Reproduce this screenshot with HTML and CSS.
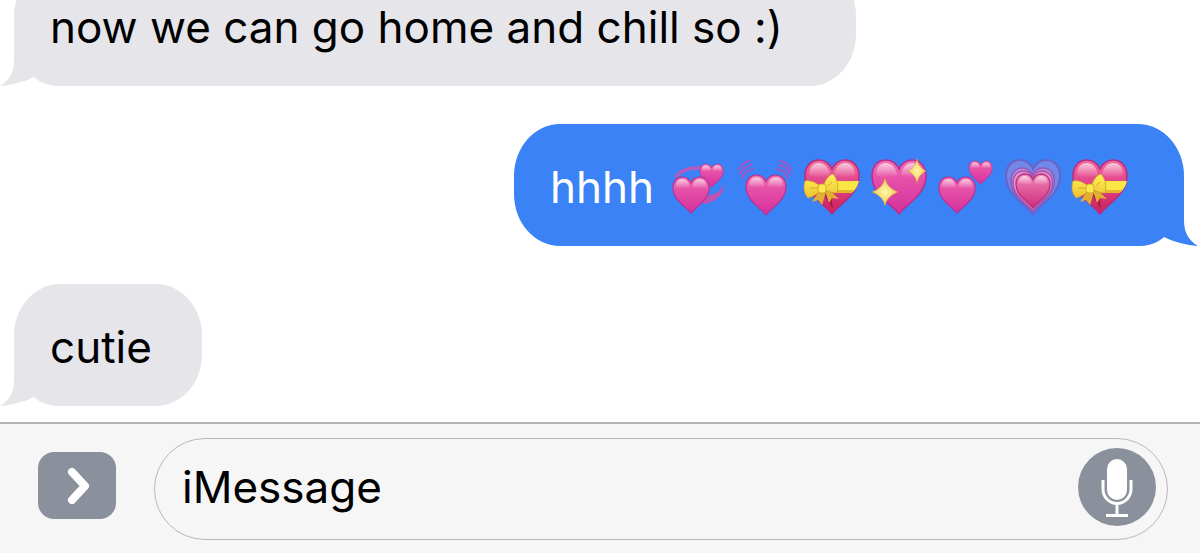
FILE: index.html
```html
<!DOCTYPE html>
<html lang="en">
<head>
  <meta charset="UTF-8">
  <meta name="viewport" content="width=device-width, initial-scale=1.0">
  <title>iMessage</title>
  <link rel="stylesheet" href="styles.css">
</head>
<body>
  <!-- shared shapes -->
  <svg class="sprite" aria-hidden="true">
    <defs>
      <linearGradient id="pink" x1="0" y1="0" x2="0" y2="1">
        <stop offset="0" stop-color="#f070b0"/>
        <stop offset="0.35" stop-color="#e650a8"/>
        <stop offset="1" stop-color="#d4309c"/>
      </linearGradient>
      <linearGradient id="red" x1="0" y1="0" x2="0" y2="1">
        <stop offset="0" stop-color="#ee6a9e"/>
        <stop offset="0.4" stop-color="#e2468c"/>
        <stop offset="1" stop-color="#c9205c"/>
      </linearGradient>
      <linearGradient id="rose" x1="0" y1="0" x2="0" y2="1">
        <stop offset="0" stop-color="#f08abc"/>
        <stop offset="0.4" stop-color="#e4609f"/>
        <stop offset="1" stop-color="#cc2c80"/>
      </linearGradient>
      <linearGradient id="shine" x1="0" y1="0" x2="0" y2="1">
        <stop offset="0" stop-color="#fff" stop-opacity="0.65"/>
        <stop offset="1" stop-color="#fff" stop-opacity="0"/>
      </linearGradient>
      <linearGradient id="gold" x1="0" y1="0" x2="0" y2="1">
        <stop offset="0" stop-color="#fdf25a"/>
        <stop offset="1" stop-color="#eec22e"/>
      </linearGradient>
      <radialGradient id="spark">
        <stop offset="0" stop-color="#fff6a8"/>
        <stop offset="1" stop-color="#f0c850"/>
      </radialGradient>
      <path id="heart" d="M27 54C18 43 0 34 0 16C0 6 6 0 14 0C20 0 25 4 27 9C29 4 34 0 40 0C48 0 54 6 54 16C54 34 36 43 27 54Z"/>
      <g id="gloss" fill="url(#shine)">
        <path d="M4 15C4 7 8 3 14 3C20 3 24 8 25 15C18 18 10 18 4 15Z"/>
        <path d="M29 15C30 8 34 3 40 3C46 3 50 7 50 15C44 18 36 18 29 15Z"/>
      </g>
      <g id="pink-heart">
        <use href="#heart" fill="url(#pink)" stroke="#b92c8e" stroke-width="1.5"/>
        <use href="#gloss"/>
      </g>
      <g id="ribbon-heart">
        <g transform="translate(3 3)">
          <use href="#heart" fill="url(#red)" stroke="#b9297a" stroke-width="1.5"/>
          <use href="#gloss"/>
        </g>
        <path fill="#f9e544" d="M26 24H57C56 28 54 32 51 35H26Z"/>
        <path fill="#e3b62e" d="M26 33H52L50 36H26Z"/>
        <path fill="#a81b42" d="M20 35L31 52L29 36Z"/>
        <path fill="#e2af35" d="M17 34L10 45L16 43L20 48L24 35ZM23 34L27 46L30 41L37 42L27 33Z"/>
        <path fill="url(#gold)" stroke="#c99a28" stroke-width="0.7" d="M17 28C12 24 6 23 3 24C1 30 2 37 6 41C11 40 15 37 18 34ZM22 27C24 22 27 18 31 17C35 21 37 29 35 36C31 36 27 35 23 33Z"/>
        <path fill="none" stroke="#d8a82c" d="M8 31L16 31M26 29L30 25"/>
        <rect x="16" y="27" width="8" height="9" rx="3" fill="#fae94d" stroke="#c99a28" stroke-width="0.7"/>
      </g>
      <path id="star" fill="url(#spark)" stroke="#c98a3c" stroke-width="0.5" d="M0 -14C2 -6 6 -3 13 0C6 3 2 6 0 14C-2 6 -6 3 -13 0C-6 -3 -2 -6 0 -14Z"/>
      <path id="tail" d="M14 0V24C14 36 10 44 0 50C12 49 24 46 34 41C41 47 48 50 62 50V0Z"/>
    </defs>
  </svg>

  <main class="messages">
    <div class="bubble received wide">now we can go home and chill so :)
      <svg class="tail" viewBox="0 0 62 50" aria-hidden="true"><use href="#tail"/></svg>
    </div>

    <div class="bubble sent">
      <span>hhhh</span>
      <span class="hearts">
        <svg class="emoji" viewBox="0 0 60 60" role="img" aria-label="revolving hearts">
          <path fill="#b45bc0" d="M6 20C10 12 20 9 34 9L33 13C22 12 14 15 9 21Z"/>
          <path fill="#c64fb2" d="M56 27C54 34 47 38 38 39L35 47C46 46 56 38 56 27Z"/>
          <use href="#pink-heart" transform="translate(32 7) scale(.43)"/>
          <use href="#pink-heart" transform="translate(5 20) scale(.67)"/>
        </svg>
        <svg class="emoji" viewBox="0 0 60 60" role="img" aria-label="beating heart">
          <g fill="none" stroke="#a055c4" stroke-width="2" stroke-linecap="round">
            <path d="M4 13C5 8 9 5 15 4M5 17C7 12 11 9 16 8M7 21C9 16 12 13 18 12"/>
            <path d="M56 13C55 8 51 5 45 4M55 17C53 12 49 9 44 8M53 21C51 16 48 13 42 12"/>
          </g>
          <use href="#pink-heart" transform="translate(11 18) scale(.74)"/>
        </svg>
        <svg class="emoji" viewBox="0 0 60 60" role="img" aria-label="heart with ribbon"><use href="#ribbon-heart"/></svg>
        <svg class="emoji" viewBox="0 0 60 60" role="img" aria-label="sparkling heart">
          <use href="#pink-heart" transform="translate(3 3)"/>
          <use href="#star" transform="translate(16 35)"/>
          <use href="#star" transform="translate(48 14) scale(.7 .9)"/>
        </svg>
        <svg class="emoji" viewBox="0 0 60 60" role="img" aria-label="two hearts">
          <use href="#pink-heart" transform="translate(3 20) scale(.67)"/>
          <use href="#pink-heart" transform="translate(33 4) scale(.43)"/>
        </svg>
        <svg class="emoji" viewBox="0 0 60 60" role="img" aria-label="growing heart">
          <use href="#heart" fill="#7088e8" stroke="#6a62c8" stroke-width="2" transform="translate(3 3)"/>
          <use href="#heart" fill="#b48ee0" stroke="#8e5cc0" stroke-width="2" transform="translate(8 11) scale(.8)"/>
          <use href="#heart" fill="#dc94d0" stroke="#b050a8" stroke-width="2" transform="translate(10 14) scale(.73)"/>
          <g transform="translate(13 17) scale(.63)">
            <use href="#heart" fill="url(#rose)" stroke="#b5307c" stroke-width="2"/>
            <use href="#gloss"/>
          </g>
        </svg>
        <svg class="emoji" viewBox="0 0 60 60" role="img" aria-label="heart with ribbon"><use href="#ribbon-heart"/></svg>
      </span>
      <svg class="tail" viewBox="0 0 62 50" aria-hidden="true"><use href="#tail"/></svg>
    </div>

    <div class="bubble received">cutie
      <svg class="tail" viewBox="0 0 62 50" aria-hidden="true"><use href="#tail"/></svg>
    </div>
  </main>

  <form class="composer">
    <button class="expand" type="button" aria-label="Show apps">
      <svg width="78" height="67" viewBox="0 0 78 67" aria-hidden="true">
        <path d="M34 20L47 34L34 48" fill="none" stroke="#fff" stroke-width="8" stroke-linecap="round" stroke-linejoin="round"/>
      </svg>
    </button>
    <div class="field">
      <input class="text" type="text" aria-label="Message" placeholder="iMessage">
      <button class="mic" type="button" aria-label="Dictate">
        <svg width="78" height="78" viewBox="0 0 78 78" aria-hidden="true">
          <rect x="29" y="11" width="20" height="41" rx="10" fill="#fff"/>
          <path d="M25 32V41A14 14.500 0 0 0 53 41V32M39 55V67M28 67.500H50" fill="none" stroke="#fff" stroke-width="3"/>
        </svg>
      </button>
    </div>
  </form>
</body>
</html>
```
FILE: styles.css
```css
* { box-sizing: border-box; }
body {
  margin: 0;
  height: 100vh;
  display: flex;
  flex-direction: column;
  overflow: hidden;
  background: #fff;
  color: #000;
  font-family: Inter, "Liberation Sans", sans-serif;
  font-size: 44px;
  line-height: 54px;
}
.sprite {
  position: absolute;
  width: 0;
  height: 0;
}
.messages {
  flex: 1;
  min-height: 0;
  display: flex;
  flex-direction: column;
  justify-content: flex-end;
  gap: 38px;
  padding: 0 16px 16px 14px;
}
.bubble {
  position: relative;
  isolation: isolate;
  flex: none;
  padding: 36px 50px 32px 36px;
  border-radius: 46px / 52px;
}
.received {
  align-self: flex-start;
  background: #e5e5ea;
  color: #000;
  fill: #e5e5ea;
}
.wide {
  width: 72%;
}
.sent {
  align-self: flex-end;
  display: flex;
  align-items: center;
  gap: 14px;
  padding-right: 54px;
  background: #3b82f6;
  color: #fff;
  fill: #3b82f6;
}
.hearts {
  display: flex;
  gap: 7px;
}
.emoji {
  width: 60px;
  height: 60px;
  margin: -3px 0;
}
.tail {
  position: absolute;
  z-index: -1;
  bottom: 0;
  left: -14px;
  width: 62px;
  height: 50px;
}
.sent .tail {
  left: auto;
  right: -14px;
  transform: scaleX(-1);
}
.composer {
  display: flex;
  align-items: center;
  gap: 38px;
  padding: 14px 32px 13px 38px;
  border-top: 2px solid #b4b4b6;
  background: #f6f6f6;
}
button {
  flex: none;
  padding: 0;
  border: 0;
  background: #8a919d;
}
button svg {
  display: block;
}
.expand {
  margin-bottom: 7px;
  border-radius: 16px;
}
.field {
  flex: 1;
  display: flex;
  align-items: center;
  padding: 9px 11px 13px;
  border: 1px solid #b8b8ba;
  border-radius: 51px;
}
.text {
  flex: 1;
  min-width: 0;
  padding: 0 16px;
  border: 0;
  outline: 0;
  background: none;
  color: #000;
  font: inherit;
}
.text::placeholder {
  color: #000;
  opacity: 1;
}
.mic {
  border-radius: 50%;
}
```
